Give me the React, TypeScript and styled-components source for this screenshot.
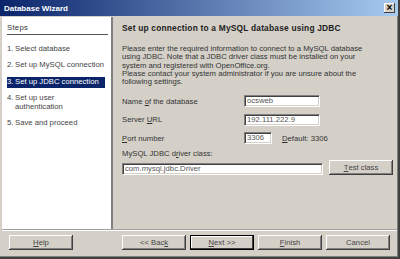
import React from 'react';
import styled, { createGlobalStyle } from 'styled-components';

const GlobalStyle = createGlobalStyle`
  html, body {
    margin: 0;
    padding: 0;
    background: #d4d0c8;
  }
  body {
    font-family: "Liberation Sans", Arial, sans-serif;
    font-size: 7.7px;
    color: #333;
  }
`;

const steps = [
  { num: '1.', label: ['Select database'] },
  { num: '2.', label: ['Set up MySQL connection'] },
  { num: '3.', label: ['Set up JDBC connection'], active: true },
  { num: '4.', label: ['Set up user', 'authentication'] },
  { num: '5.', label: ['Save and proceed'] },
];

const App = () => {
  return (
    <>
      <GlobalStyle />
      <Window>
        <TitleBar>
          <TitleText>Database Wizard</TitleText>
          <CloseButton>×</CloseButton>
        </TitleBar>
        <Body>
          <Sidebar>
            <StepsHeader>Steps</StepsHeader>
            <StepList>
              {steps.map((s) => (
                <StepItem key={s.num} $active={!!s.active}>
                  <StepNum>{s.num}</StepNum>
                  <StepText>
                    {s.label.map((line) => (
                      <span key={line}>{line}</span>
                    ))}
                  </StepText>
                </StepItem>
              ))}
            </StepList>
          </Sidebar>
          <Content>
            <Heading>Set up connection to a MySQL database using JDBC</Heading>
            <Paragraph>
              Please enter the required information to connect to a MySQL database
              <br />
              using JDBC. Note that a JDBC driver class must be installed on your
              <br />
              system and registered with OpenOffice.org.
              <br />
              Please contact your system administrator if you are unsure about the
              <br />
              following settings.
            </Paragraph>
            <FormRow>
              <Label>
                Name <u>o</u>f the database
              </Label>
              <Input $width={76}>ocsweb</Input>
            </FormRow>
            <FormRow>
              <Label>
                Server <u>U</u>RL
              </Label>
              <Input $width={76}>192.111.222.9</Input>
            </FormRow>
            <FormRow>
              <Label>
                <u>P</u>ort number
              </Label>
              <Input $width={28}>3306</Input>
              <DefaultNote>
                <u>D</u>efault: 3306
              </DefaultNote>
            </FormRow>
            <DriverLabel>
              MySQL JDBC d<u>r</u>iver class:
            </DriverLabel>
            <DriverRow>
              <Input $width={201}>com.mysql.jdbc.Driver</Input>
              <Button>
                <u>T</u>est class
              </Button>
            </DriverRow>
          </Content>
        </Body>
        <Separator />
        <Footer>
          <Button>
            <u>H</u>elp
          </Button>
          <NavButtons>
            <Button>
              &lt;&lt; Bac<u>k</u>
            </Button>
            <Button $default>
              <u>N</u>ext &gt;&gt;
            </Button>
            <Button>
              <u>F</u>inish
            </Button>
            <Button>Cancel</Button>
          </NavButtons>
        </Footer>
      </Window>
    </>
  );
};

const Window = styled.div`
  width: 400px;
  height: 259px;
  box-sizing: border-box;
  display: flex;
  flex-direction: column;
  background: #d4d0c8;
  border-right: 2px solid #404040;
  border-bottom: 2px solid #404040;
  padding-left: 2px;
  box-shadow: inset -1px -1px 0 #808080;
`;
const TitleBar = styled.div`
  height: 16px;
  flex: none;
  margin-left: -2px;
  display: flex;
  align-items: center;
  justify-content: space-between;
  padding: 0 3px 0 4px;
  background: linear-gradient(to right, #0a246a, #a6caf0);
`;
const TitleText = styled.span`
  color: #fff;
  font-weight: bold;
  font-size: 8px;
`;
const CloseButton = styled.div`
  width: 11px;
  height: 10px;
  box-sizing: border-box;
  background: #d4d0c8;
  box-shadow: inset -1px -1px 0 #404040, inset 1px 1px 0 #fff;
  color: #000;
  font-size: 10px;
  font-weight: bold;
  line-height: 9px;
  text-align: center;
`;
const Body = styled.div`
  display: flex;
  flex: 1;
  min-height: 0;
  margin-top: 1px;
  margin-right: 1px;
`;
const Sidebar = styled.div`
  width: 111px;
  flex: none;
  background: #fff;
  padding: 7px 3px 0 5px;
  box-sizing: border-box;
  border-right: 2px solid #808080;
`;
const StepsHeader = styled.div`
  line-height: 8.5px;
  padding-bottom: 1px;
  border-bottom: 1px solid #555;
  font-size: 7.7px;
  letter-spacing: 0.3px;
`;
const StepList = styled.div`
  margin-top: 9px;
  display: flex;
  flex-direction: column;
  gap: 5.5px;
  width: 98px;
`;
const StepItem = styled.div<{ $active: boolean }>`
  display: flex;
  line-height: 8.5px;
  padding: 1.25px 0;
  background: ${({ $active }) => ($active ? '#0a246a' : 'transparent')};
  color: ${({ $active }) => ($active ? '#fff' : '#444')};
`;
const StepNum = styled.span`
  width: 8px;
  flex: none;
`;
const StepText = styled.span`
  display: flex;
  flex-direction: column;
`;
const Content = styled.div`
  flex: 1;
  padding: 7px 0 0 9px;
`;
const Heading = styled.div`
  font-weight: bold;
  font-size: 8.4px;
  line-height: 9px;
  color: #222;
  letter-spacing: 0.2px;
`;
const Paragraph = styled.div`
  margin-top: 12px;
  line-height: 8.25px;
`;
const FormRow = styled.div`
  display: flex;
  align-items: center;
  margin-top: 9px;
  & + & {
    margin-top: 6.5px;
  }
`;
const Label = styled.div`
  width: 122px;
  flex: none;
`;
const Input = styled.div<{ $width: number }>`
  width: ${({ $width }) => $width}px;
  height: 12px;
  box-sizing: border-box;
  background: #fff;
  padding: 0 2px;
  box-shadow: inset 1px 1px 0 #404040, inset -1px -1px 0 #d4d0c8;
  border: 1px solid;
  border-color: #808080 #fff #fff #808080;
  line-height: 10px;
  color: #555;
`;
const DefaultNote = styled.div`
  margin-left: 10px;
`;
const DriverLabel = styled.div`
  margin-top: 5px;
  line-height: 9px;
`;
const DriverRow = styled.div`
  display: flex;
  align-items: flex-end;
  gap: 6px;
  margin-top: 2px;
`;
const Separator = styled.div`
  height: 1px;
  flex: none;
  background: #a0a0a0;
  border-bottom: 1px solid #fff;
  margin-right: 1px;
`;
const Footer = styled.div`
  height: 22px;
  flex: none;
  display: flex;
  align-items: flex-start;
  padding: 4px 0 0 7px;
  gap: 49px;
`;
const NavButtons = styled.div`
  display: flex;
  gap: 4px;
`;
const Button = styled.div<{ $default?: boolean }>`
  width: 64px;
  height: 15px;
  box-sizing: border-box;
  flex: none;
  display: flex;
  align-items: center;
  justify-content: center;
  background: #d4d0c8;
  color: #444;
  box-shadow: ${({ $default }) =>
    $default
      ? 'inset 0 0 0 1px #000, inset -2px -2px 0 #404040, inset 2px 2px 0 #fff'
      : 'inset -1px -1px 0 #404040, inset 1px 1px 0 #fff, inset -2px -2px 0 #808080'};
`;

export default App;
